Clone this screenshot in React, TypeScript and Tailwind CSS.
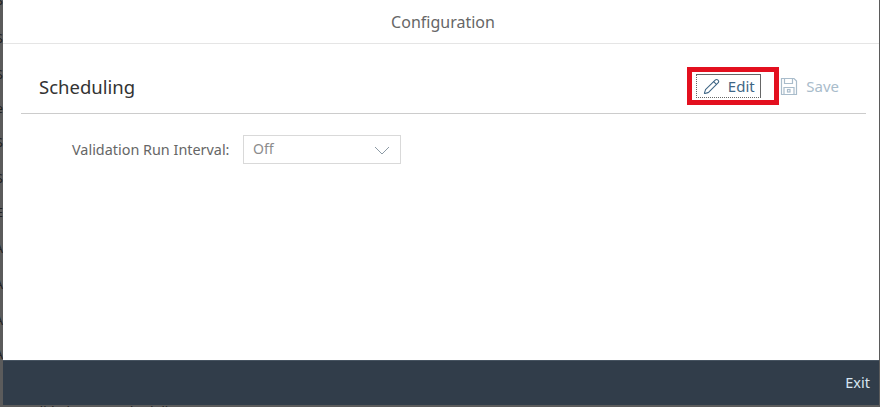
import React from 'react';
import { Pencil } from 'lucide-react';

const font = { fontFamily: '"Noto Sans", "Open Sans", sans-serif' };

// letters of the page behind the dialog, only a sliver shows on the left
const behind = [
    ['S', 'mt-[-8px]'],
    ['S', 'mt-[22px]'],
    ['S', 'mt-[20px]'],
    ['e', 'mt-[18px]'],
    ['S', 'mt-[18px]'],
    ['S', 'mt-[20px]'],
    ['E', 'mt-[18px]'],
    ['A', 'mt-[20px]'],
    ['A', 'mt-[20px]'],
    ['A', 'mt-[20px]'],
    ['A', 'mt-[18px]'],
];

function SaveIcon() {
    return (
        <svg width="18" height="19" viewBox="0 0 18 19" fill="none" stroke="#a9bccb" strokeWidth="1.2">
            <path d="M1.5 1.5h12.5l2.5 2.5v13.5h-15z" />
            <path d="M4.5 1.5v5h8v-5" />
            <path d="M4 17.5v-7h10v7" />
            <rect x="7.5" y="12.5" width="2.5" height="2.5" />
        </svg>
    );
}

export default function App() {
    return (
        <div className="w-[880px] h-[407px] overflow-hidden bg-[#5b5b5b] flex flex-col" style={font}>
            <div className="flex h-[405px] shrink-0">
                <div className="w-[3px] shrink-0 overflow-hidden flex flex-col items-end">
                    {behind.map(([c, m], i) => (
                        <span key={i} className={`${m} text-[13px] leading-[16px] text-[#222222]`}>{c}</span>
                    ))}
                </div>

                <div className="w-[876px] shrink-0 bg-white flex flex-col">
                    <div className="h-[44px] shrink-0 border-b border-[#e5e5e5] flex items-center justify-center pl-[4px] text-[16px] text-[#666666]">
                        Configuration
                    </div>

                    <div className="flex-1 pl-[18px] pr-[13px]">
                        <div className="h-[70px] border-b border-[#cccccc] flex items-center justify-between pl-[18px] pr-[27px] pt-[15px]">
                            <h2 className="mt-[2px] text-[18.5px] text-[#333333]">Scheduling</h2>
                            <div className="flex items-center">
                                <div className="w-[92px] h-[38px] border-[5px] border-[#e3101f] flex items-center pl-[4px]">
                                    <button className="w-[65px] h-[24px] border border-dotted [border-top-style:solid] [border-right-style:solid] border-[#666666] flex items-center justify-center gap-[8px] text-[15px] text-[#3f6685]">
                                        <Pencil size={17} strokeWidth={1.5} />
                                        Edit
                                    </button>
                                </div>
                                <button className="ml-[1px] flex items-center gap-[8px] text-[15px] text-[#a9bccb]">
                                    <SaveIcon />
                                    Save
                                </button>
                            </div>
                        </div>

                        <div className="flex items-center mt-[21px] pl-[51px]">
                            <label className="w-[171px] text-[14.4px] text-[#666666]">Validation Run Interval:</label>
                            <div className="w-[158px] h-[29px] border border-[#d9d9d9] flex items-center justify-between pl-[9px] pr-[10px] pb-[2px] text-[14px] text-[#8c8c8c]">
                                Off
                                <svg width="16" height="9" viewBox="0 0 16 9" fill="none" stroke="#8c9aa5" strokeWidth="1" className="mt-[3px]">
                                    <path d="M1 1l7 7 7-7" />
                                </svg>
                            </div>
                        </div>
                    </div>

                    <div className="h-[45px] shrink-0 bg-[#313d4a] border-t border-[#465360] flex items-center justify-end pr-[9px] text-[14.5px] text-[#d7e6f2]">
                        Exit
                    </div>
                </div>
            </div>
            <div className="h-[2px] overflow-hidden flex text-[13px] leading-[12px] text-[#222222] whitespace-nowrap">
                <span className="w-[530px] pl-[25px]">Validation Run Scheduling</span>
                <span className="w-[125px]">1</span>
                <span className="w-[160px]">YII</span>
                <span>IRI</span>
            </div>
        </div>
    );
}
